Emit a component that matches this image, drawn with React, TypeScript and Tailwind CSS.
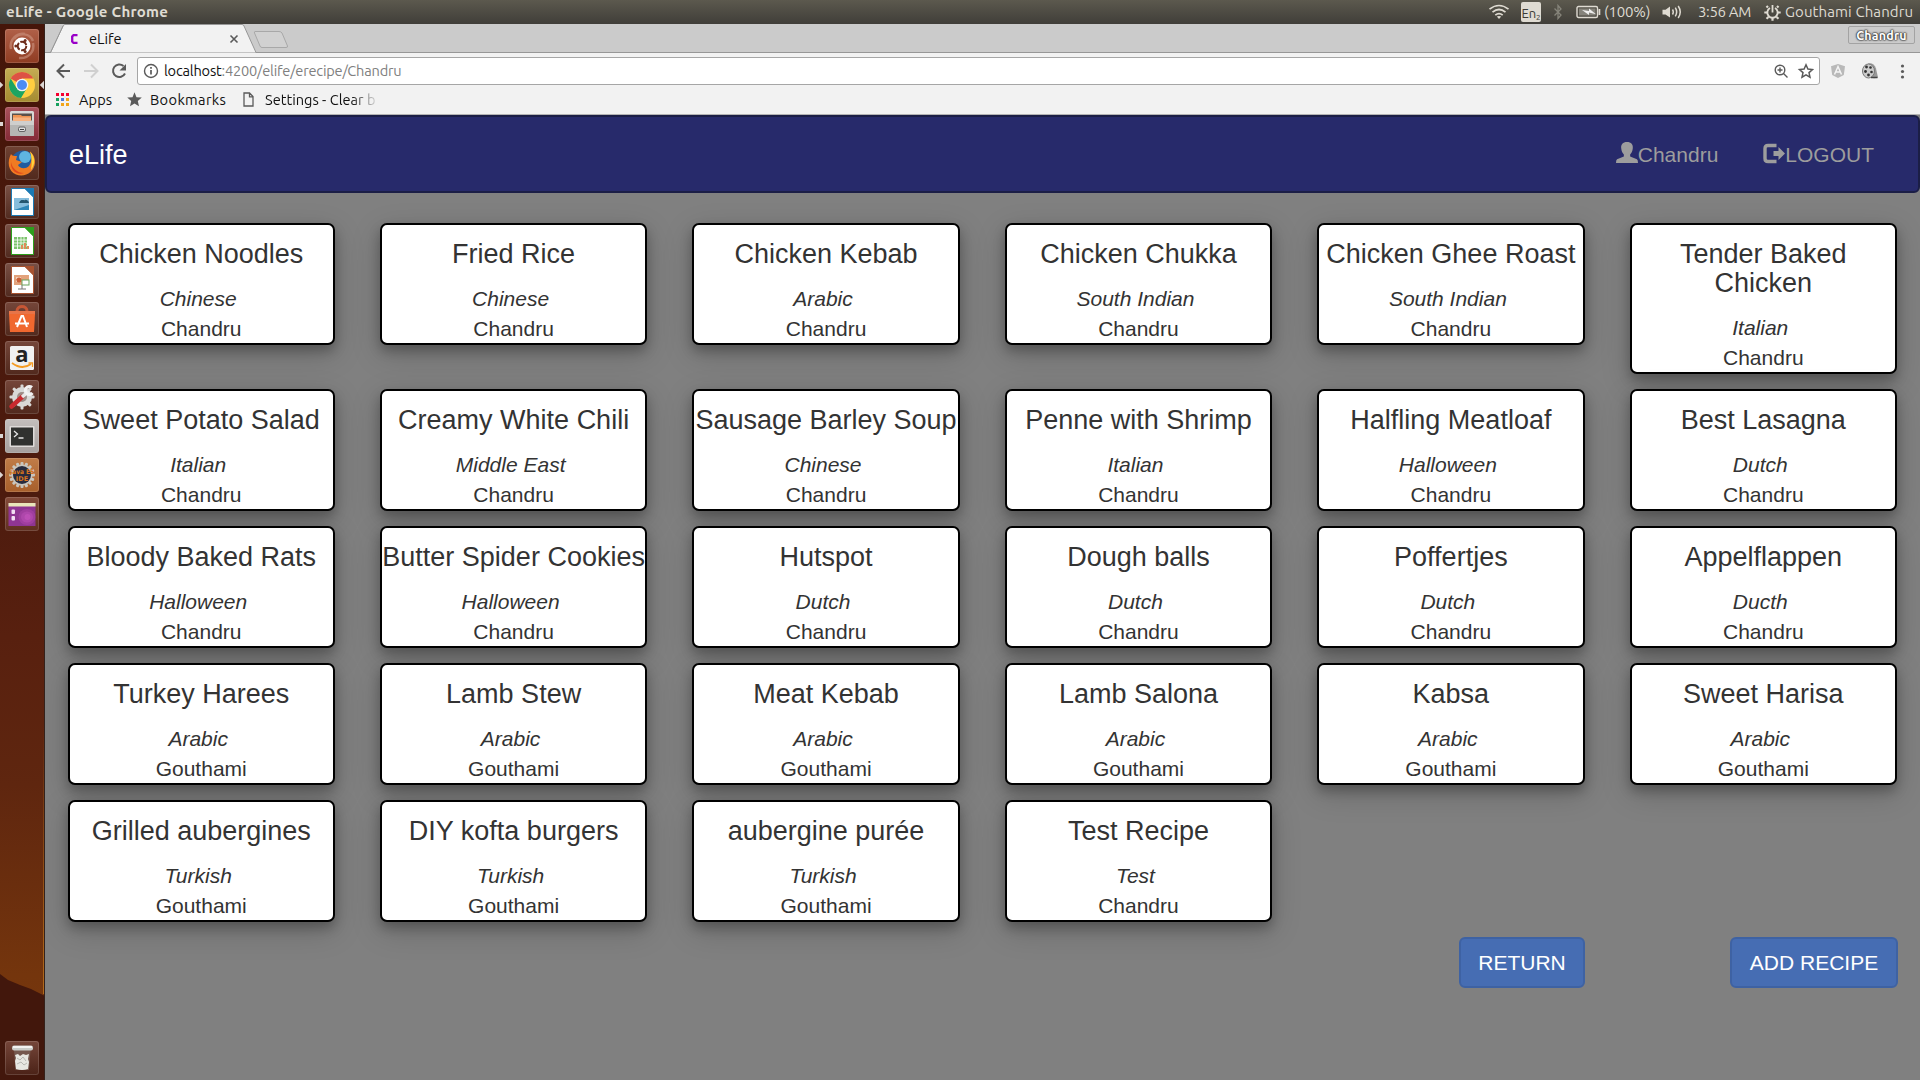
import React from 'react';

const T = ({ children, w, className }: { children: React.ReactNode; w: number; className: string }) => (
  <span className={'inline-block whitespace-nowrap ' + className} style={{ width: w }}>{children}</span>
);

type Recipe = [string, string, string];
const recipes: Recipe[] = [
  ['Chicken Noodles', 'Chinese', 'Chandru'],
  ['Fried Rice', 'Chinese', 'Chandru'],
  ['Chicken Kebab', 'Arabic', 'Chandru'],
  ['Chicken Chukka', 'South Indian', 'Chandru'],
  ['Chicken Ghee Roast', 'South Indian', 'Chandru'],
  ['Tender Baked Chicken', 'Italian', 'Chandru'],
  ['Sweet Potato Salad', 'Italian', 'Chandru'],
  ['Creamy White Chili', 'Middle East', 'Chandru'],
  ['Sausage Barley Soup', 'Chinese', 'Chandru'],
  ['Penne with Shrimp', 'Italian', 'Chandru'],
  ['Halfling Meatloaf', 'Halloween', 'Chandru'],
  ['Best Lasagna', 'Dutch', 'Chandru'],
  ['Bloody Baked Rats', 'Halloween', 'Chandru'],
  ['Butter Spider Cookies', 'Halloween', 'Chandru'],
  ['Hutspot', 'Dutch', 'Chandru'],
  ['Dough balls', 'Dutch', 'Chandru'],
  ['Poffertjes', 'Dutch', 'Chandru'],
  ['Appelflappen', 'Ducth', 'Chandru'],
  ['Turkey Harees', 'Arabic', 'Gouthami'],
  ['Lamb Stew', 'Arabic', 'Gouthami'],
  ['Meat Kebab', 'Arabic', 'Gouthami'],
  ['Lamb Salona', 'Arabic', 'Gouthami'],
  ['Kabsa', 'Arabic', 'Gouthami'],
  ['Sweet Harisa', 'Arabic', 'Gouthami'],
  ['Grilled aubergines', 'Turkish', 'Gouthami'],
  ['DIY kofta burgers', 'Turkish', 'Gouthami'],
  ['aubergine purée', 'Turkish', 'Gouthami'],
  ['Test Recipe', 'Test', 'Chandru'],
];

function Card({ r }: { r: Recipe }) {
  return (
    <div className="rounded-[7px] border-2 border-black bg-white pt-[15px] text-center text-[21px] leading-[30px] text-[#333] shadow-[0_6px_12px_rgba(0,0,0,0.24),0_9px_30px_rgba(0,0,0,0.19)]">
      <h4 className="mb-[15px] text-[27px] leading-[29px]">{r[0]}</h4>
      <p className="pr-[6px] italic">{r[1]}</p>
      <p className="-mb-px">{r[2]}</p>
    </div>
  );
}

function SystemBar() {
  return (
    <header className="flex h-6 items-center bg-linear-to-b from-[#5c594e] to-[#403e39] pr-[5px] pl-[6px] font-['Ubuntu','Noto_Sans',sans-serif] text-[#dfdbd2]">
      <T w={170} className="text-[15px] leading-6 font-bold tracking-[0.25px]">eLife - Google Chrome</T>
      <div className="ml-auto flex h-6 items-center text-[15px]">
        <svg width="22" height="16" viewBox="0 0 22 16" className="mr-[11px]" fill="none" stroke="#dfdbd2" strokeWidth="1.7">
          <path d="M1.5 5.2Q11-2.2 20.500 5.200" /><path d="M4.500 8.200Q11 2.800 17.500 8.200" /><path d="M7.300 11.200Q11 8 14.700 11.200" />
          <path d="M11 15L8.800 12.600Q11 11.200 13.200 12.600Z" fill="#dfdbd2" stroke="none" />
        </svg>
        <span className="flex h-5 w-5 items-end justify-center rounded-[2px] bg-[#dfdbd2] text-[13px] leading-[18px] text-[#3c3b37]">En<small className="text-[8px] leading-[9px]">2</small></span>
        <svg width="10" height="16" viewBox="0 0 10 16" className="ml-3 mr-[13px]" fill="none" stroke="#86847a" strokeWidth="1.3"><path d="M1.500 4.500L8 11L5 14.500V1.500L8 5L1.500 11.500" /></svg>
        <svg width="25" height="14" viewBox="0 0 25 14" className="mr-[3px]">
          <rect x="1" y="1.500" width="20.500" height="11" rx="1.500" fill="none" stroke="#dfdbd2" strokeWidth="1.400" /><rect x="3" y="3.500" width="16.500" height="7" fill="#85837b" />
          <path d="M22.500 4v6h1.800v-6z" fill="#dfdbd2" /><path d="M6 5l7 1V3.500l7 5.700-7-1.700v2.500z" fill="#eee" />
        </svg>
        <T w={46} className="tracking-[-0.2px]">(100%)</T>
        <svg width="21" height="14" viewBox="0 0 21 14" className="ml-[12px]" fill="none" stroke="#dfdbd2" strokeWidth="1.500">
          <path d="M0.500 4.800h3L8 1.500v11L3.500 9.500h-3z" fill="#dfdbd2" stroke="none" /><path d="M10.500 4.500Q12 7 10.500 9.500M13.300 2.700Q16 7 13.300 11.300M16.200 1Q20.300 7 16.200 13" />
        </svg>
        <T w={54} className="ml-[15px] tracking-[-0.35px]">3:56 AM</T>
        <svg width="17" height="17" viewBox="-8.500 -8.500 17 17" className="ml-[12px]" fill="none" stroke="#dfdbd2">
          <path d="M-2.500-4.500A5.200 5.200 0 1 0 2.500-4.500" strokeWidth="1.900" /><path d="M0-7.500V0" strokeWidth="1.800" />
          <path d="M4.500-5L6-6.500M-4.500-5L-6-6.500M5.500 0H8.200M-5.500 0H-8.200M4 4.500L6 6.300M-4 4.500L-6 6.300M0 5.500V8.200" strokeWidth="2.200" />
        </svg>
        <T w={130} className="ml-[4px] tracking-[0.1px]">Gouthami Chandru</T>
      </div>
    </header>
  );
}

const tiles = [
  'from-[#b06048] to-[#8f3c22]', 'from-[#c5ac53] to-[#a58b31]', 'from-[#a9525c] to-[#842a37]', 'from-[#6f4233] to-[#51291d]',
  'from-[#795045] to-[#512a1f]', 'from-[#795045] to-[#512a1f]', 'from-[#795045] to-[#512a1f]', 'from-[#75463a] to-[#51291d]',
  'from-[#75463a] to-[#51291d]', 'from-[#75463a] to-[#51291d]', 'from-[#c4bfbd] to-[#a6a09e]', 'from-[#c07c48] to-[#a75f2b]', 'from-[#834b3a] to-[#602f20]',
];

const Doc = ({ c, children }: { c: string; children: React.ReactNode }) => (
  <><path d="M6.500 3.500H20L28.500 12V30.500H6.500z" fill="#fff" stroke={c} strokeWidth="1" /><path d="M19 3H29V13z" fill={c} />{children}</>
);
const Gear = ({ r, fill, n }: { r: number; fill: string; n: number }) => (
  <g fill={fill}><circle cx="17" cy="17" r={r} />{Array.from({ length: n }, (_, i) => <rect key={i} x="15.500" y={14.5 - r} width="3" height="6" rx="1" transform={`rotate(${(i * 360) / n} 17 17)`} />)}</g>
);

const icons: React.ReactNode[] = [
  <><path d="M6 20C4 10 12 4 20 5M28 14c2 9-5 16-14 15M9 10c5-7 16-6 19 2" stroke="#cd9480" strokeWidth="2.500" fill="none" opacity=".6" /><circle cx="17" cy="17" r="8.500" fill="#fff" /><circle cx="17" cy="17" r="4.300" fill="none" stroke="#6d2c1b" strokeWidth="2" strokeDasharray="7.500 1.500" /><g fill="#6d2c1b"><circle cx="10.800" cy="17" r="1.500" /><circle cx="20.100" cy="11.600" r="1.500" /><circle cx="20.100" cy="22.400" r="1.500" /></g></>,
  <><circle cx="17" cy="17" r="13" fill="#ffcd40" /><path d="M17 17L5.700 10.500A13 13 0 0 1 28.300 10.500H17z" fill="#dd5144" /><path d="M5.700 10.500A13 13 0 0 0 16 30L22 20L17 17L11.500 20z" fill="#1da462" /><circle cx="17" cy="17" r="6.300" fill="#f2f2f2" /><circle cx="17" cy="17" r="5" fill="#4c8bf5" /></>,
  <><rect x="5" y="4" width="24" height="25" rx="1.500" fill="#d8d8d6" /><rect x="7" y="6.500" width="20" height="7" fill="#5a504a" /><path d="M8 8h8l1 1h9v5H8z" fill="#ef9350" /><path d="M8 10.500h18v3.500H8z" fill="#f8b380" /><path d="M5 14h24v13.500a1.500 1.500 0 0 1-1.500 1.500h-21A1.500 1.500 0 0 1 5 27.500z" fill="#b6b6b4" /><path d="M5 14h24v4H5z" fill="#cfcfcd" /><rect x="13.500" y="20" width="7" height="4.500" rx="1.500" fill="#ddd" stroke="#666" /><path d="M15 22.500h4" stroke="#444" /></>,
  <><circle cx="18" cy="16.500" r="12" fill="#235c9f" /><circle cx="20" cy="11" r="6" fill="#5fb4e0" /><path d="M6 8C2 16 3 25 11 28.500C20 32 29 26 30 17C30.500 11 27 7 25 5.500C28 12 26 17 24 20C20 24 14 22 13 19L17 16L11 14L12 10C9 10 7 10 6 8z" fill="#f07b22" /><path d="M25 5.500C31 11 30 19 26 24C27 17 27 11 25 5.500z" fill="#ffd33b" /><path d="M6 16c1 6 6 11 13 11-7 3-14-3-13-11z" fill="#e1491c" /></>,
  <Doc c="#1b7ab5"><rect x="9" y="13" width="15" height="12" fill="#86bddc" /><path d="M14 18c2-5 5-2 6-3s4 1 4 3z" fill="#24566f" /><path d="M9 25h15v-5l-9 3z" fill="#2d86b7" /></Doc>,
  <Doc c="#2ca01c"><rect x="9" y="13" width="13" height="12" fill="#7cc36c" /><path d="M9 16h13M9 19h13M9 22h13M12.500 13v12M16 13v12M19 13v12" stroke="#fff" strokeWidth=".8" /><path d="M16 25v-4h2v4zM19 25v-6h2v6zM22 25v-3h2v3z" fill="#e08b5a" /></Doc>,
  <Doc c="#a8522f"><rect x="9" y="12" width="15" height="10" fill="#e3a27b" /><path d="M11 15h5M11 18h4" stroke="#fff" /><circle cx="14" cy="17" r="2.500" fill="#ca6038" /><rect x="17" y="17" width="7" height="5" fill="#fff" stroke="#69a35b" /><path d="M13 26h8M17 22v4" stroke="#777" /></Doc>,
  <><path d="M12 9c0-6 10-6 10 0" fill="none" stroke="#c65635" strokeWidth="3" /><path d="M4 9h26v4H4z" fill="#e77448" /><path d="M4 12h26l-1 18H5z" fill="#f0682f" /><path d="M12 25l4.500-11h1.500L22 25M10 21.500h14" stroke="#fff" strokeWidth="2" fill="none" /></>,
  <><rect x="5" y="5" width="24" height="24" rx="1.500" fill="#f1f1f1" /><text x="17" y="20.500" textAnchor="middle" fontFamily="Open Sans, sans-serif" fontSize="22" fontWeight="bold" fill="#222">a</text><path d="M7 22Q17 29.500 26 23" stroke="#f59b22" strokeWidth="1.800" fill="none" /><path d="M23.500 22h4v4" stroke="#f59b22" strokeWidth="1.300" fill="none" /></>,
  <><Gear r={10} n={8} fill="#d9d9d7" /><circle cx="17" cy="17" r="5" fill="#9d8d87" /><path d="M6.500 26.500L17 17" stroke="#c92a2e" strokeWidth="4.500" strokeLinecap="round" /><path d="M17 17L24 11" stroke="#e8e8e8" strokeWidth="3.500" /><path d="M27 7.500A4 4 0 1 0 27.500 13" stroke="#f2f2f2" strokeWidth="3" fill="none" /></>,
  <><rect x="4.500" y="7" width="25" height="21" rx="1" fill="#dedbd9" /><rect x="6" y="8.500" width="22" height="18" fill="#30312f" /><path d="M9 12l3.500 3L9 18M13.500 19h5" stroke="#e5e5e5" strokeWidth="1.300" fill="none" /></>,
  <><Gear r={10.5} n={16} fill="#c9c5bd" /><circle cx="17" cy="17" r="9" fill="#272a3d" /><g fontFamily="DejaVu Sans, sans-serif" fontSize="6.500" fontWeight="bold" fill="#d8741f" textAnchor="middle"><text x="17" y="16" textLength="24" lengthAdjust="spacingAndGlyphs">Java EE</text><text x="17" y="22.500">IDE</text></g></>,
  <><rect x="3.500" y="6" width="27" height="23" fill="#8f3592" /><rect x="3.500" y="6" width="27" height="3.500" fill="#e9e6ba" /><g fill="#d25cc7"><ellipse cx="22" cy="20" rx="8.500" ry="8" opacity=".25" /><ellipse cx="22" cy="20" rx="6" ry="5.500" opacity=".3" /><ellipse cx="22.500" cy="20" rx="3" ry="3" opacity=".4" /></g><rect x="6.500" y="12.500" width="3.500" height="4.500" rx="1" fill="#f3def3" /><rect x="6.500" y="19" width="3.500" height="4.500" rx="1" fill="#f3def3" /></>,
];
const trash = <><path d="M9 9L10.500 29H24L25.500 9z" fill="#75584f" /><path d="M10 14l3-1 2 2 3-2 3 1 3-1-1 5 1 3-1 7q-6 2-12 0l-1-8 1-3z" fill="#e7e7e2" /><path d="M12 17l3 2 3-3 3 4M12 23l4-2 3 3 3-2" stroke="#b7b7b2" fill="none" /><rect x="7" y="4.500" width="21" height="5" rx="2" fill="#c9cbc8" /><path d="M8 6h19" stroke="#fff" strokeWidth="1.500" /></>;

function Tile({ tile, mark, children }: { tile: string; mark?: string; children: React.ReactNode }) {
  return (
    <div className="relative flex w-full justify-center">
      {mark === 'arrow' && <i className="absolute top-[14px] left-[-4px] size-[6px] rotate-45 bg-[#dcd6d3]" />}
      {mark === 'bar' && <i className="absolute top-[15px] left-0 h-1 w-[3px] bg-[#dcd6d3]" />}
      <div className={'h-[34px] w-[34px] overflow-hidden rounded-[3px] bg-linear-to-b shadow-[inset_0_0_0_1px_rgba(255,255,255,0.14)] ' + tile}>
        <svg width="34" height="34" viewBox="0 0 34 34">{children}</svg>
      </div>
    </div>
  );
}

function Launcher() {
  const marks: Record<number, string> = { 1: 'arrow', 2: 'bar', 10: 'bar', 11: 'arrow' };
  return (
    <aside className="relative flex w-[45px] shrink-0 flex-col gap-[5px] overflow-hidden border-r border-[#34211b] bg-[linear-gradient(180deg,#451509_0%,#4d1b0e_45%,#58200f_58%,#5f260f_72%,#74350d_90%,#79390d_100%)] pt-[5px]">
      <i className="absolute top-[700px] right-0 h-[270px] w-px bg-linear-to-b from-transparent to-[#b36a1c]" />
      <svg className="absolute bottom-0 left-0" width="45" height="106" viewBox="0 0 45 106"><path d="M0 0L8 6L20 11L31 15L45 22V106H0z" fill="#42170c" /></svg>
      {icons.map((ic, i) => <Tile key={i} tile={tiles[i]} mark={marks[i]}>{ic}</Tile>)}
      <i className="absolute top-[58px] right-[-3px] size-[6px] rotate-45 bg-[#dcd6d3]" />
      <div className="mt-auto mb-[5px]"><Tile tile="from-[#75463a] to-[#4b2217]">{trash}</Tile></div>
    </aside>
  );
}

function Chrome() {
  return (
    <div className="h-[91px] bg-[#f2f2f2] font-['Ubuntu','Noto_Sans',sans-serif] text-[#111]">
      <div className="relative h-[29px] border-b border-[#979797] bg-[#cbcbcb]">
        <svg className="absolute top-0 left-0" width="250" height="29" viewBox="0 0 250 29">
          <path d="M0 28.500H5.500L18 2Q18.500 .5 20 .5H197Q198.500 .5 199 2L211 28.500V29H0" fill="#f2f2f2" stroke="#979797" />
          <path d="M0 29V28H5.500L18 1H0z" fill="#cbcbcb" /><path d="M0 28.500H5.500L18 2" fill="none" stroke="#979797" />
          <path d="M210 7.500H234Q236 7.500 237 9L242.500 22Q243 23.500 241 23.500H217Q215.500 23.500 215 22L209.500 9Q209 7.500 210 7.500z" fill="#d1d1d1" stroke="#a8a8a8" />
          <path d="M32.500 11.200H28.500L27.200 12.500V17.500L28.500 18.800H32.500" fill="none" stroke="#9a00c8" strokeWidth="2.300" />
          <path d="M185.500 11.500l7 7M192.500 11.500l-7 7" stroke="#5a5a5a" strokeWidth="1.600" />
        </svg>
        <div className="relative flex h-full justify-between pr-[5px] pl-[44px]">
          <span className="text-[14.6px] leading-[29px]">eLife</span>
          <span className="mt-[2px] h-[18px] w-[67px] rounded-[2px] border border-[#a3a3a3] text-center text-[12.5px] leading-[17px] font-bold tracking-[0.2px] text-white [text-shadow:0_0_1px_#333,0_0_1px_#333,0_0_2px_#333,0_0_2px_#333]">Chandru</span>
        </div>
      </div>
      <div className="flex h-[36px] items-center pl-[10px]">
        <svg width="74" height="18" viewBox="0 0 74 18" fill="none" strokeWidth="2">
          <path d="M15 9H2.500M9 2.500L2.500 9L9 15.500" stroke="#5a5a5a" /><path d="M29 9H42M36 2.500L42.500 9L36 15.500" stroke="#d0d0d0" />
          <path d="M68.500 4A6.300 6.300 0 1 0 70 11.500" stroke="#5a5a5a" /><path d="M71 2V8.500H64.500z" fill="#5a5a5a" />
        </svg>
        <div className="ml-[8px] flex h-[28px] w-[1683px] items-center rounded-[3px] border border-[#a6a6a6] bg-white px-[5px]">
          <svg width="16" height="16" viewBox="0 0 16 16" fill="none" stroke="#5a5a5a"><circle cx="8" cy="8" r="6.500" strokeWidth="1.400" /><path d="M8 7v4.500M8 4v1.700" strokeWidth="1.700" /></svg>
          <span className="mb-px ml-[5px] text-[14.6px] tracking-[-0.2px] text-[#808080]"><span className="text-[#111]">localhost</span>:4200/elife/erecipe/Chandru</span>
          <svg className="ml-auto" width="42" height="18" viewBox="0 0 42 18" fill="none" stroke="#5a5a5a">
            <circle cx="8" cy="8" r="4.800" strokeWidth="1.400" /><path d="M5.500 8h5M8 5.500v5M11.500 11.500l4 4" strokeWidth="1.400" />
            <path d="M34 2.800l1.900 4.300 4.600.4-3.500 3.100 1 4.600-4-2.400-4 2.400 1-4.600-3.500-3.100 4.600-.4z" strokeWidth="1.500" />
          </svg>
        </div>
        <svg className="ml-[10px]" width="78" height="18" viewBox="0 0 78 18">
          <path d="M8 2L15 4.200L13.800 13L8 16L2.200 13L1 4.200z" fill="#b9b9b9" /><path d="M4.500 12.500L8 4.500L11.500 12.500M6 10h4" fill="none" stroke="#f5f5f5" strokeWidth="1.500" />
          <path d="M38 1.500q6-1 8 5l2 9q-5 2-9-1z" fill="#999" /><ellipse cx="38.500" cy="9" rx="6" ry="7" fill="#ccc" stroke="#777" /><g fill="#333"><circle cx="36.500" cy="5" r="1.400" /><circle cx="40.500" cy="5.500" r="1.300" /><circle cx="35.500" cy="9.500" r="1.400" /><circle cx="41.500" cy="10" r="1.300" /><circle cx="38.500" cy="13" r="1.400" /></g><path d="M41 15.500h6.500" stroke="#444" strokeWidth="1.500" />
          <g fill="#5a5a5a"><circle cx="72.500" cy="4" r="1.600" /><circle cx="72.500" cy="9.500" r="1.600" /><circle cx="72.500" cy="15" r="1.600" /></g>
        </svg>
      </div>
      <div className="flex h-[26px] items-center border-b border-[#b3b3b3] pb-[4px] pl-[11px] text-[14.6px] leading-[21px]">
        <svg width="14" height="14" viewBox="0 0 14 14" className="mr-[9px]">
          {['#f5002f', '#f5002f', '#f5002f', '#17a05e', '#4c7bd9', '#f2a51a', '#17a05e', '#f2a51a', '#f2a51a'].map((c, i) => <rect key={i} x={(i % 3) * 5} y={Math.floor(i / 3) * 5} width="3" height="3" fill={c} />)}
        </svg>
        <T w={36} className="tracking-[0.1px]">Apps</T>
        <svg width="15" height="15" viewBox="0 0 15 15" className="ml-3 mr-[8px]"><path d="M7.500 .3l2 4.900 5.300.4-4 3.500 1.200 5.200-4.500-2.800L3 14.300l1.200-5.200-4-3.500 5.300-.4z" fill="#5a5a5a" /></svg>
        <T w={80} className="tracking-[0.35px]">Bookmarks</T>
        <svg width="11" height="15" viewBox="0 0 11 15" className="ml-[13px] mr-[11px]" fill="none" stroke="#5a5a5a" strokeWidth="1.300"><path d="M1 1h5.500L10 4.500V14H1zM6.500 1v3.800H10" /></svg>
        <span className="w-[114px] overflow-hidden whitespace-nowrap [mask-image:linear-gradient(to_right,black_76%,transparent)]">Settings - Clear b</span>
      </div>
    </div>
  );
}

export default function App() {
  return (
    <div className="flex h-[1080px] w-[1920px] flex-col overflow-hidden">
      <SystemBar />
      <div className="flex min-h-0 flex-1">
        <Launcher />
        <div className="flex min-w-0 flex-1 flex-col bg-[#808080] font-['Liberation_Sans',sans-serif]">
          <Chrome />
          <nav className="flex h-[78px] shrink-0 items-center rounded-[6px] border-2 border-[#1b1e46] bg-[#272a6b] pt-[2px] pr-[44px] pl-[22px] text-[21px] text-[#9d9d9d]">
            <span className="text-[27px] text-white">eLife</span>
            <span className="ml-auto flex items-center">
              <svg width="22" height="21" viewBox="0 0 21 21" preserveAspectRatio="none" className="mb-[5px]"><path d="M10.500 0C14.500 0 16.500 2.500 16 6.500C15.800 9 14.800 11 13.500 12.500V14.500L20 17.300Q21 18 21 21H0Q0 18 1 17.300L7.500 14.500V12.500C6.200 11 5.200 9 5 6.500C4.500 2.500 6.500 0 10.500 0z" fill="#9d9d9d" /></svg>
              Chandru
            </span>
            <span className="ml-[45px] flex items-center">
              <svg width="22" height="21" viewBox="0 0 22 21" className="mb-[3px]"><path d="M13.500 2.500H5Q2 2.500 2 5.500V15.500Q2 18.500 5 18.500H13.500" fill="none" stroke="#9d9d9d" strokeWidth="3.400" /><path d="M10.500 8H15.500V4L22 10.500L15.500 17V13H10.500z" fill="#9d9d9d" /></svg>
              LOGOUT
            </span>
          </nav>
          <main className="grid grid-cols-6 items-start gap-x-[45px] gap-y-[15px] pt-[30px] pr-[23px] pl-[22.5px]">
            {recipes.map((r) => <Card key={r[0]} r={r} />)}
          </main>
          <div className="mt-[15px] flex justify-end gap-[145px] pr-[22px] text-[21px] leading-[30px] text-white">
            <button className="h-[51px] w-[126px] rounded-[6px] border-2 border-[#3e62a3] bg-[#466db3]">RETURN</button>
            <button className="h-[51px] w-[168px] rounded-[6px] border-2 border-[#3e62a3] bg-[#466db3]">ADD RECIPE</button>
          </div>
        </div>
      </div>
    </div>
  );
}
